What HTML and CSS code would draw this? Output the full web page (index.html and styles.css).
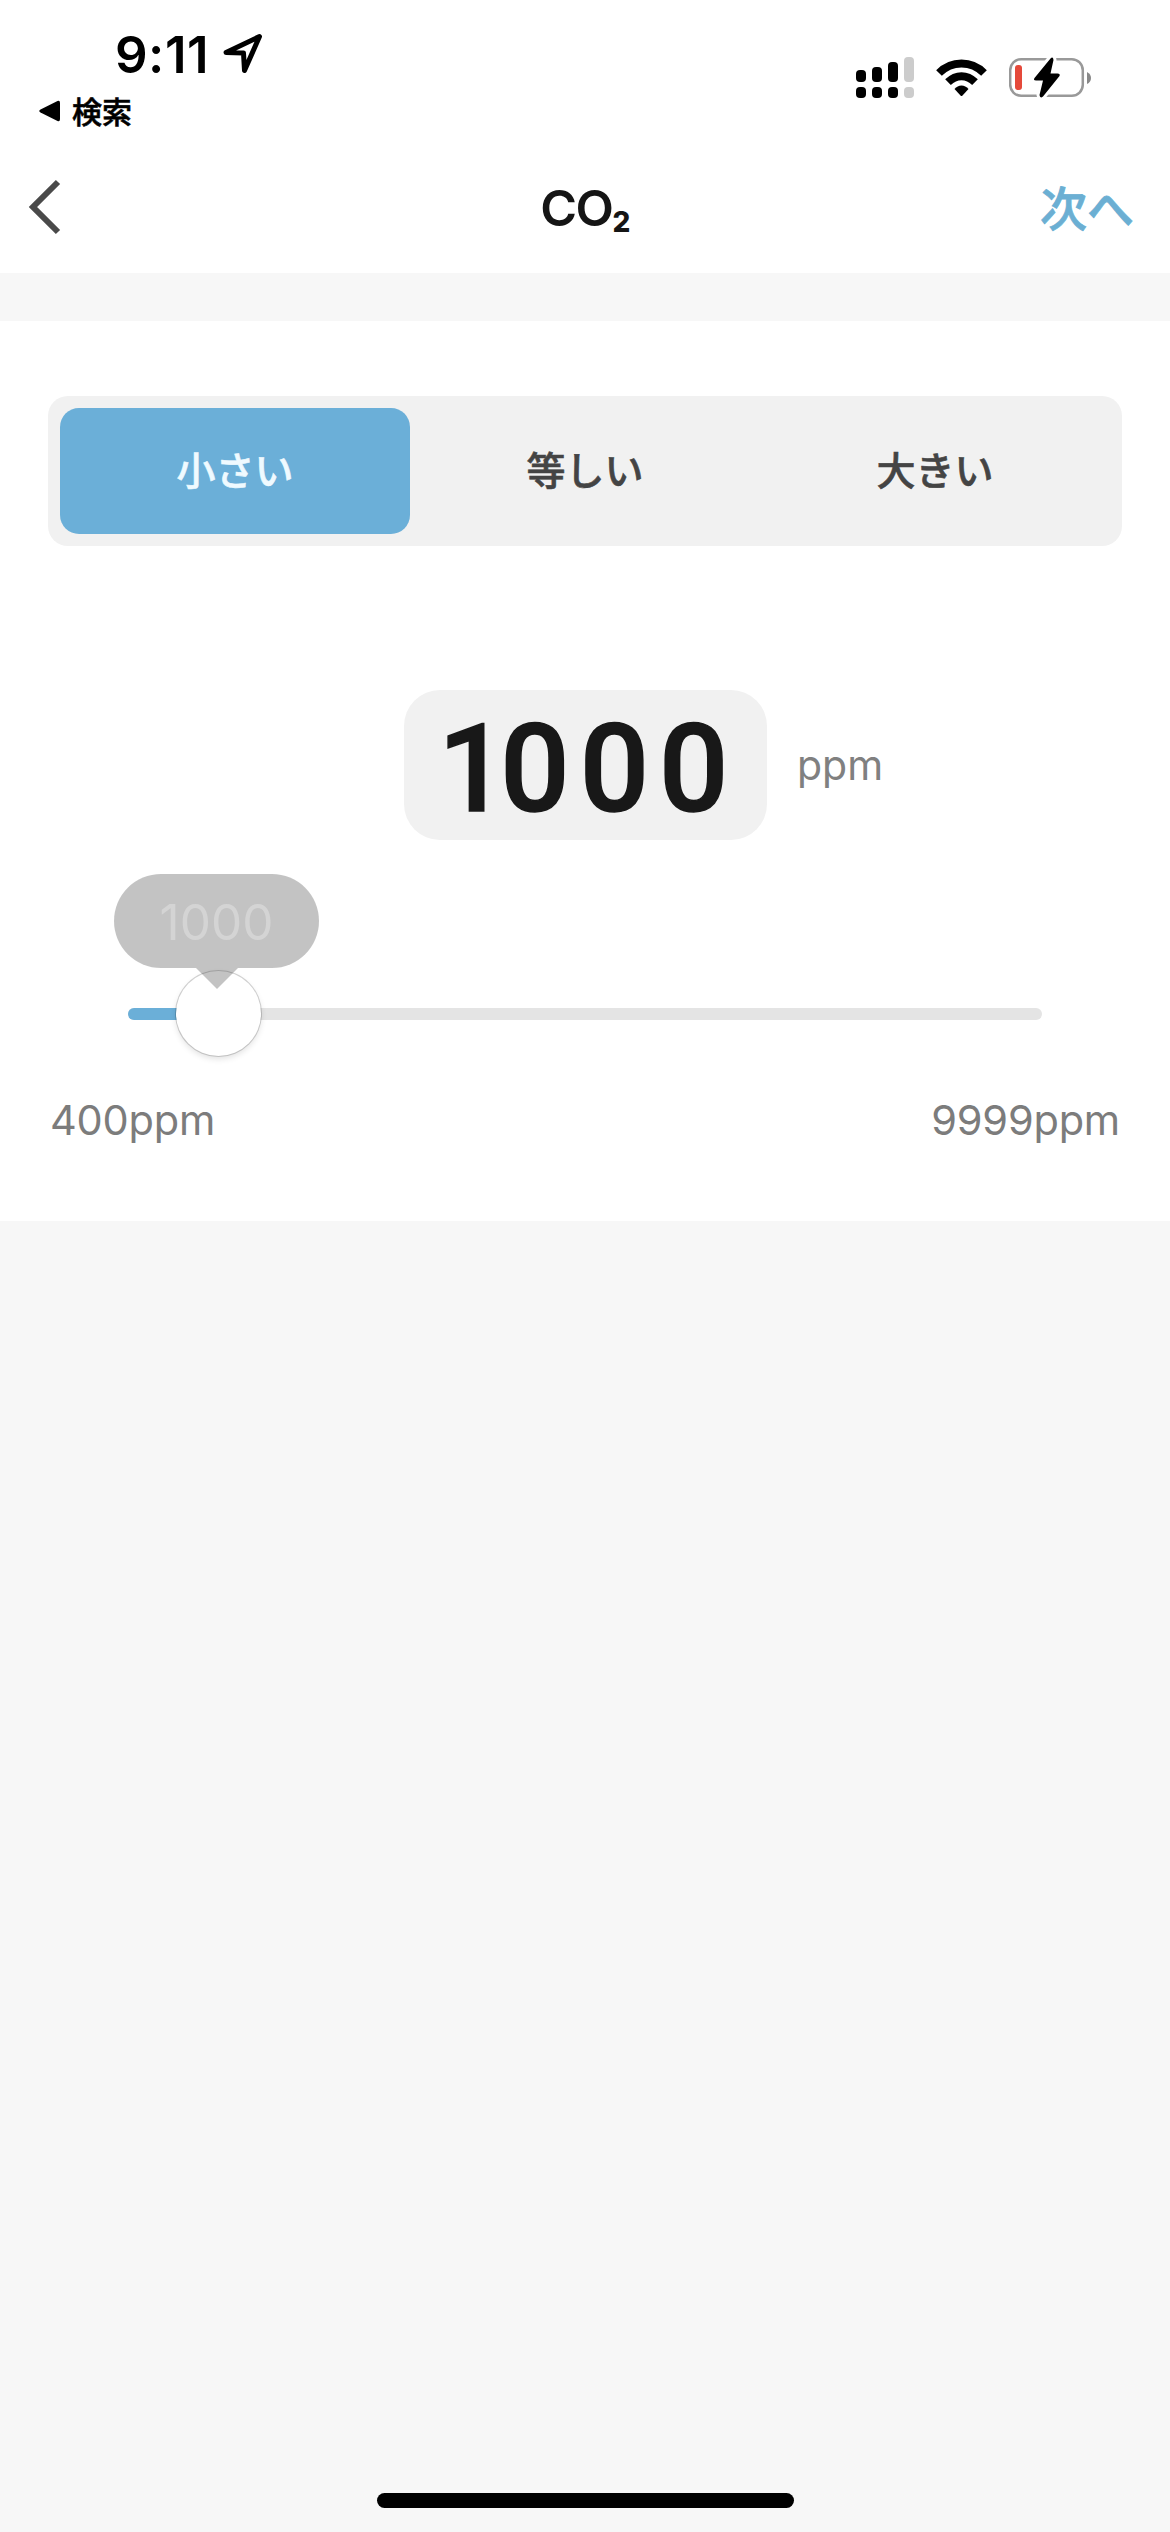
FILE: index.html
```html
<!DOCTYPE html>
<html lang="ja">

<head>
    <meta charset="UTF-8">
    <meta name="viewport" content="width=device-width, initial-scale=1.0">
    <title>CO₂</title>
    <link rel="stylesheet" href="styles.css">
</head>

<body>
    <div class="screen">
        <div class="status">
            <div class="status-left">
                <div class="clock">
                    <span>9:11</span>
                    <svg class="location" width="42" height="42" viewBox="0 0 42 42">
                        <path d="M4 19.500 37.500 3.500 22.500 37.500 21.500 20Z" />
                    </svg>
                </div>
                <div class="return">
                    <svg width="22" height="22" viewBox="0 0 22 22">
                        <path d="M1.500 9.500 18.500 1Q21 0 21 3V19Q21 22 18.500 21L1.500 12.500Q-1 11 1.500 9.500Z" />
                    </svg>
                    <span>検索</span>
                </div>
            </div>
            <div class="status-right">
                <svg width="58" height="42" viewBox="0 0 58 42">
                    <rect x="0" y="13" width="10" height="12" rx="4" />
                    <rect x="16" y="10" width="10" height="15" rx="4" />
                    <rect x="32" y="5" width="10" height="20" rx="4" />
                    <rect class="off" x="48" y="0" width="10" height="25" rx="4" />
                    <rect x="0" y="30" width="10" height="11" rx="4" />
                    <rect x="16" y="30" width="10" height="11" rx="4" />
                    <rect x="32" y="30" width="10" height="11" rx="4" />
                    <rect class="off" x="48" y="30" width="10" height="11" rx="4" />
                </svg>
                <svg class="wifi" width="51" height="38" viewBox="0 0 51 38">
                    <path class="wave" d="M3 14Q12.500 4.500 25.500 4.500T48 14" />
                    <path class="wave" d="M12 23.200Q18 17.200 25.500 17.200T39 23.200" />
                    <path d="M18.500 30Q21.500 26.500 25.500 26.500T32.500 30L26.500 36.500Q25.500 37.500 24.500 36.500Z" />
                </svg>
                <svg class="battery" width="82" height="44" viewBox="0 0 82 44">
                    <rect class="case" x="1.200" y="3.200" width="72.600" height="36.600" rx="11" />
                    <path class="nub" d="M78 16Q82 18 82 22T78 28Z" />
                    <rect class="level" x="6" y="9" width="7" height="25" rx="3" />
                    <path class="bolt" d="M41.500 2.500 25.500 22Q24 24.500 27 24.500H34L30.500 39Q31 43 34 40.500L50.500 20Q51.500 17.500 48.500 17.500H41.500L44.500 4Q44 0 41.500 2.500Z" />
                </svg>
            </div>
        </div>

        <div class="navbar">
            <svg class="back" width="34" height="56" viewBox="0 0 34 56">
                <path d="M30 3 5 28 30 53" />
            </svg>
            <div class="title">CO<span>2</span></div>
            <div class="next">次へ</div>
        </div>

        <div class="panel">
            <div class="segments">
                <div class="segment active">小さい</div>
                <div class="segment">等しい</div>
                <div class="segment">大きい</div>
            </div>
            <div class="value">
                <div class="number"><span>1</span>000</div>
                <div class="unit">ppm</div>
            </div>
            <div class="slider">
                <div class="track">
                    <div class="fill"></div>
                </div>
                <div class="thumb"></div>
                <div class="bubble">1000</div>
            </div>
            <div class="range">
                <span>400ppm</span>
                <span>9999ppm</span>
            </div>
        </div>

        <div class="home"></div>
    </div>
</body>

</html>
```
FILE: styles.css
```css
* {
    box-sizing: border-box;
}

body {
    margin: 0;
    background: #f7f7f7;
    font-family: Inter, "Noto Sans CJK JP", sans-serif;
}

.screen {
    display: flex;
    flex-direction: column;
    width: 1170px;
    height: 2532px;
}

.status {
    display: flex;
    justify-content: space-between;
    height: 141px;
    background: #fff;
    color: #000;
}

.status-left {
    padding: 24px 0 0 39px;
}

.clock {
    display: flex;
    align-items: center;
    gap: 13px;
    height: 60px;
    padding-left: 76px;
    font-size: 51px;
    font-weight: 600;
    letter-spacing: .5px;
}

.location {
    fill: none;
    stroke: #000;
    stroke-width: 5;
    stroke-linejoin: round;
}

.return {
    display: flex;
    align-items: center;
    gap: 11px;
    height: 54px;
    font-size: 30px;
    font-weight: 500;
    -webkit-text-stroke: .6px #000;
}

.return span {
    padding-bottom: 3px;
}

.status-right {
    display: flex;
    align-items: flex-start;
    padding: 57px 79px 0 0;
}

.off {
    fill: #ccc;
}

.wifi {
    margin: 2px 0 0 22px;
}

.wave {
    fill: none;
    stroke: #000;
    stroke-width: 8;
}

.battery {
    margin: -1px 0 0 22px;
}

.case {
    fill: none;
    stroke: #999;
    stroke-width: 2.5;
}

.nub {
    fill: #888;
}

.level {
    fill: #e5493a;
}

.bolt {
    stroke: #fff;
    stroke-width: 6;
    paint-order: stroke;
}

.navbar {
    display: grid;
    grid-template-columns: 1fr auto 1fr;
    align-items: center;
    height: 132px;
    padding: 0 36px 0 28px;
    background: #fff;
}

.back {
    fill: none;
    stroke: #4a4a4a;
    stroke-width: 6;
}

.title {
    padding: 2px 0 0 7px;
    color: #151515;
    font-size: 50px;
    font-weight: 600;
    letter-spacing: -1.5px;
}

.title span {
    display: inline-block;
    font-size: 28px;
    font-weight: 800;
    transform: translateY(6px);
}

.next {
    justify-self: end;
    padding-bottom: 4px;
    color: #6bafd3;
    font-size: 47px;
    font-weight: 500;
    -webkit-text-stroke: .8px #6bafd3;
}

.panel {
    height: 900px;
    margin-top: 48px;
    padding: 75px 48px 0;
    background: #fff;
}

.segments {
    display: grid;
    grid-template-columns: repeat(3, 1fr);
    height: 150px;
    padding: 12px;
    border-radius: 20px;
    background: #f1f1f1;
}

.segment {
    display: flex;
    align-items: center;
    justify-content: center;
    padding-bottom: 6px;
    border-radius: 19px;
    color: #444;
    font-size: 39px;
    font-weight: 500;
    -webkit-text-stroke: .6px;
}

.active {
    background: #6bafd8;
    color: #effaff;
}

.value {
    display: flex;
    align-items: center;
    gap: 30px;
    height: 150px;
    margin: 144px 0 0 356px;
}

.number {
    width: 363px;
    height: 150px;
    padding-left: 34px;
    border-radius: 36px;
    background: #f1f1f1;
    color: #181818;
    font-family: Roboto, sans-serif;
    font-size: 122px;
    font-weight: 500;
    line-height: 159px;
    letter-spacing: 10px;
    -webkit-text-stroke: 1.5px #181818;
}

.number span {
    letter-spacing: -7px;
}

.unit {
    color: #808080;
    font-size: 41px;
}

.slider {
    position: relative;
    width: 914px;
    margin: 168px 0 0 80px;
}

.track {
    height: 12px;
    border-radius: 6px;
    background: #e4e4e4;
}

.fill {
    width: 90px;
    height: 12px;
    border-radius: 6px 0 0 6px;
    background: #6bafd8;
}

.thumb {
    position: absolute;
    left: 48px;
    top: -37px;
    width: 85px;
    height: 85px;
    border-radius: 50%;
    background: #fff;
    box-shadow: 0 0 0 1px rgba(0, 0, 0, .17), 0 3px 6px rgba(0, 0, 0, .12);
}

.bubble {
    position: absolute;
    left: -14px;
    top: -134px;
    width: 205px;
    height: 94px;
    border-radius: 47px;
    background: rgba(0, 0, 0, .235);
    color: #d4d4d4;
    font-size: 49.5px;
    line-height: 97px;
    text-align: center;
}

.bubble::after {
    content: "";
    position: absolute;
    left: 82px;
    top: 94px;
    border: 21px solid transparent;
    border-top-color: rgba(0, 0, 0, .235);
    border-bottom: 0;
}

.range {
    display: flex;
    justify-content: space-between;
    margin-top: 74px;
    padding: 0 2px;
    color: #7c7c7c;
    font-size: 41.5px;
    line-height: 52px;
    letter-spacing: -.2px;
}

.home {
    width: 417px;
    height: 15px;
    margin: auto auto 24px;
    border-radius: 8px;
    background: #000;
}
```
